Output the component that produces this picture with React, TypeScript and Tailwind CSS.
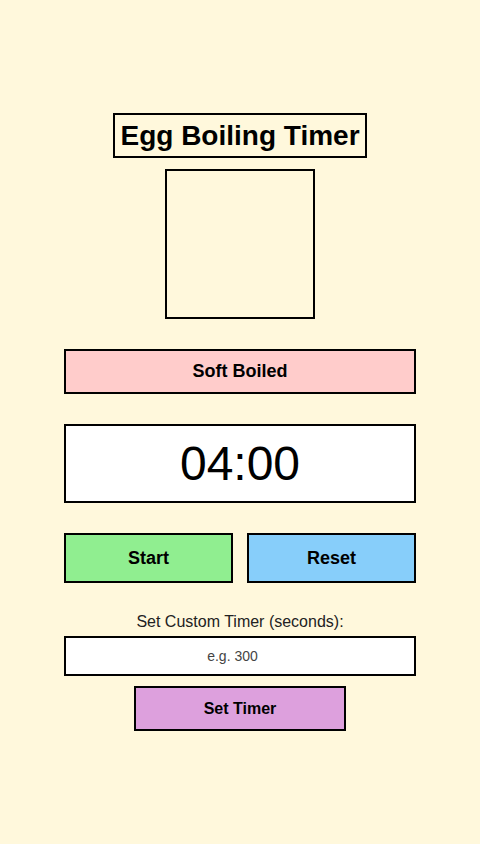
export default function App() {
  return (
    <div
      className="min-h-[844px] w-full bg-[#fff8dc] text-black"
      style={{ fontFamily: '"Liberation Sans", Arial, sans-serif' }}
    >
      <div className="mx-auto flex w-[352px] flex-col items-center pt-[113px]">
        <h1 className="flex h-[45px] items-center border-2 border-black px-[5px] text-[28px] font-bold leading-none">
          Egg Boiling Timer
        </h1>

        <div className="mt-[11px] h-[150px] w-[150px] border-2 border-black" />

        <button className="mt-[30px] h-[45px] w-full border-2 border-black bg-[#ffcccb] text-[18px] font-bold">
          Soft Boiled
        </button>

        <div className="mt-[30px] flex h-[79px] w-full items-center justify-center border-2 border-black bg-white text-[48px] leading-none">
          04:00
        </div>

        <div className="mt-[30px] grid w-full grid-cols-2 gap-[14px]">
          <button className="h-[50px] border-2 border-black bg-[#90ee90] text-[18px] font-bold">
            Start
          </button>
          <button className="h-[50px] border-2 border-black bg-[#87cefa] text-[18px] font-bold">
            Reset
          </button>
        </div>

        <label className="mt-[30px] text-[16px] leading-[18px] text-[#222]">
          Set Custom Timer (seconds):
        </label>

        <input
          type="number"
          placeholder="e.g. 300"
          className="mt-[5px] h-[40px] w-full border-2 border-black bg-white text-center text-[14px] placeholder:text-[#444]"
        />

        <button className="mt-[10px] h-[45px] w-[212px] border-2 border-black bg-[#dda0dd] text-[16px] font-bold">
          Set Timer
        </button>
      </div>
    </div>
  );
}
